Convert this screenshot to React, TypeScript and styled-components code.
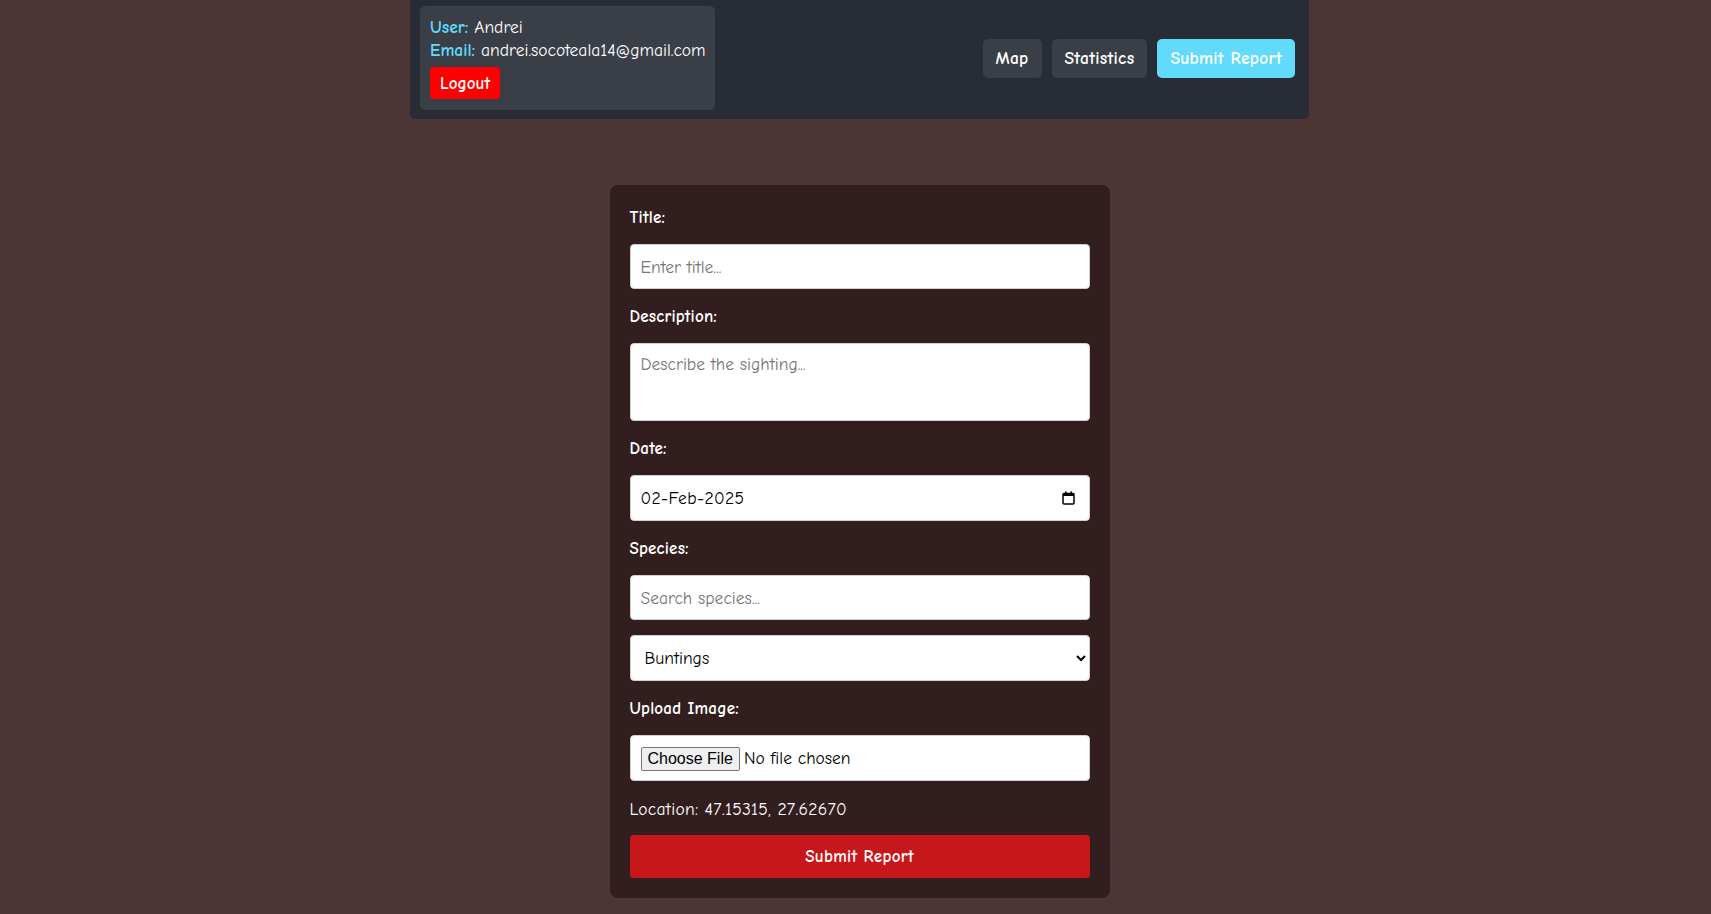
import React from "react";
import styled, { createGlobalStyle } from "styled-components";

const FONT = `"Comic Sans MS", "Comic Neue", "DejaVu Sans", sans-serif`;

const GlobalStyle = createGlobalStyle`
  html, body { margin: 0; padding: 0; }
  body {
    background: #4e3535;
    font-family: ${FONT};
    font-size: 17px;
    color: #ffffff;
  }
`;

const Page = styled.div`
  min-height: 914px;
  padding-left: 8px;
  box-sizing: border-box;
  display: flex;
  flex-direction: column;
  align-items: center;
`;

const Header = styled.header`
  width: 899px;
  height: 119px;
  box-sizing: border-box;
  background: #282c34;
  border-radius: 0 0 5px 5px;
  padding: 6px 14px 9px 10px;
  display: flex;
  justify-content: space-between;
  align-items: center;
`;

const UserBox = styled.div`
  width: 295px;
  height: 104px;
  align-self: flex-start;
  box-sizing: border-box;
  background: #3a3e47;
  border-radius: 5px;
  padding: 10px 10px;
  display: flex;
  flex-direction: column;
`;

const InfoLine = styled.div`
  line-height: 23px;
  font-size: 17.5px;
  white-space: nowrap;
`;

const InfoKey = styled.span`
  color: #61dafb;
  font-weight: bold;
`;

const LogoutButton = styled.button`
  margin-top: 5px;
  width: 70px;
  height: 32px;
  background: #ff0000;
  color: #fff;
  border: none;
  border-radius: 4px;
  font-family: ${FONT};
  font-weight: bold;
  font-size: 17px;
  padding: 0;
  cursor: pointer;
`;

const Nav = styled.nav`
  display: flex;
  gap: 10px;
`;

const NavButton = styled.button<{ $active?: boolean }>`
  height: 39px;
  padding: 0 13px;
  border: none;
  border-radius: 5px;
  background: ${(p) => (p.$active ? "#61dafb" : "#3a3e47")};
  color: #fff;
  font-family: ${FONT};
  font-weight: bold;
  font-size: 17.5px;
  letter-spacing: 0.3px;
  cursor: pointer;
`;

const Card = styled.form`
  margin-top: 66px;
  width: 500px;
  box-sizing: border-box;
  background: #331e1f;
  border-radius: 8px;
  padding: 20px;
  display: flex;
  flex-direction: column;
`;

const Label = styled.label<{ $first?: boolean }>`
  display: block;
  font-weight: bold;
  font-size: 17px;
  letter-spacing: 0.2px;
  line-height: 22px;
  margin: ${(p) => (p.$first ? "2px" : "17px")} 0 15px;
`;

const fieldBase = `
  width: 100%;
  box-sizing: border-box;
  background: #ffffff;
  border: 1px solid #cfcfcf;
  border-radius: 4px;
  font-family: ${FONT};
  font-size: 17.5px;
  color: #000;
  outline: none;
`;

const TextInput = styled.input<{ $h?: number }>`
  ${fieldBase}
  height: ${(p) => p.$h ?? 45}px;
  padding: 0 10px;
  &::placeholder { color: #757575; }
`;

const TextArea = styled.textarea`
  ${fieldBase}
  height: 78px;
  padding: 10px;
  resize: none;
  display: block;
  &::placeholder { color: #757575; }
`;

const DateBox = styled.div`
  ${fieldBase}
  height: 46px;
  padding: 0 14px 0 10px;
  display: flex;
  align-items: center;
  justify-content: space-between;
`;

const DateValue = styled.input`
  border: none;
  outline: none;
  background: transparent;
  font-family: ${FONT};
  font-size: 17.5px;
  letter-spacing: 0.4px;
  color: #000;
  padding: 0;
  flex: 1;
`;

const Select = styled.select`
  ${fieldBase}
  margin-top: 15px;
  height: 46px;
  padding: 0 10px;
`;

const FileInput = styled.input`
  ${fieldBase}
  height: 46px;
  padding: 0 10px;
  display: flex;
  align-items: center;
  line-height: 44px;
  &::file-selector-button {
    font-family: "Liberation Sans", Arial, sans-serif;
    font-size: 16px;
    height: 24px;
    padding: 0 6px;
    margin-right: 4px;
    background: #efefef;
    border: 1px solid #767676;
    border-radius: 2px;
    color: #000;
  }
`;

const Location = styled.p`
  margin: 17px 0 15px;
  font-size: 17.5px;
  letter-spacing: 0.3px;
  line-height: 22px;
`;

const SubmitButton = styled.button`
  height: 43px;
  width: 100%;
  border: none;
  border-radius: 4px;
  background: #c8171a;
  color: #fff;
  font-family: ${FONT};
  font-weight: bold;
  font-size: 17px;
  letter-spacing: 0.3px;
  cursor: pointer;
`;

const CalendarIcon = () => (
  <svg width="13" height="14" viewBox="0 0 13 14" aria-hidden>
    <rect x="1" y="2.5" width="11" height="10.5" rx="1" fill="none" stroke="#000" strokeWidth="1.5" />
    <rect x="1" y="2.5" width="11" height="2.5" fill="#000" />
    <rect x="3" y="0.5" width="1.6" height="3" fill="#000" />
    <rect x="8.4" y="0.5" width="1.6" height="3" fill="#000" />
  </svg>
);

export default function App() {
  return (
    <>
      <GlobalStyle />
      <Page>
        <Header>
          <UserBox>
            <InfoLine>
              <InfoKey>User:</InfoKey> Andrei
            </InfoLine>
            <InfoLine>
              <InfoKey>Email:</InfoKey> andrei.socoteala14@gmail.com
            </InfoLine>
            <LogoutButton type="button">Logout</LogoutButton>
          </UserBox>
          <Nav>
            <NavButton type="button">Map</NavButton>
            <NavButton type="button">Statistics</NavButton>
            <NavButton type="button" $active>
              Submit Report
            </NavButton>
          </Nav>
        </Header>

        <Card onSubmit={(e) => e.preventDefault()}>
          <Label $first htmlFor="title">Title:</Label>
          <TextInput id="title" placeholder="Enter title..." />

          <Label htmlFor="desc">Description:</Label>
          <TextArea id="desc" placeholder="Describe the sighting..." />

          <Label htmlFor="date">Date:</Label>
          <DateBox>
            <DateValue id="date" type="text" defaultValue="02-Feb-2025" readOnly />
            <CalendarIcon />
          </DateBox>

          <Label htmlFor="species">Species:</Label>
          <TextInput id="species" placeholder="Search species..." />
          <Select defaultValue="Buntings">
            <option>Buntings</option>
            <option>Finches</option>
            <option>Sparrows</option>
          </Select>

          <Label htmlFor="image">Upload Image:</Label>
          <FileInput id="image" type="file" />

          <Location>Location: 47.15315, 27.62670</Location>
          <SubmitButton type="submit">Submit Report</SubmitButton>
        </Card>
      </Page>
    </>
  );
}
